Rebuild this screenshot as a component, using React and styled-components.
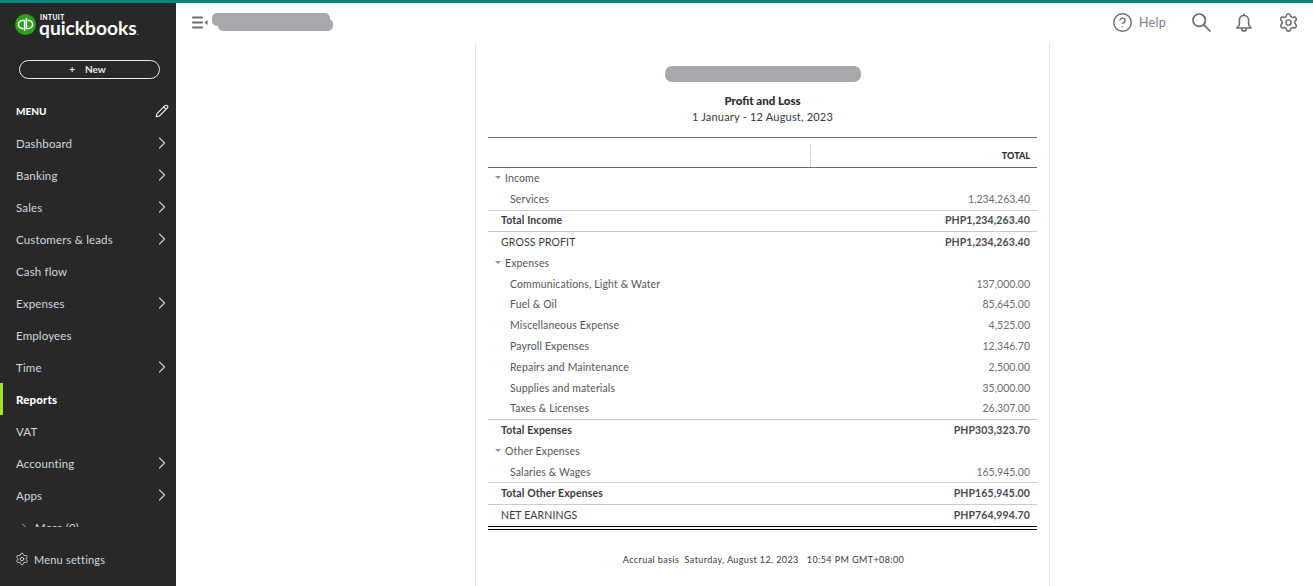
import React from 'react';
import styled, { createGlobalStyle } from 'styled-components';
import { ChevronRight, Pencil, Settings, CircleHelp } from 'lucide-react';

const Global = createGlobalStyle`
  html, body { margin: 0; padding: 0; height: 100%; background: #fff; overflow: hidden; }
  #root { height: 100%; }
  * { box-sizing: border-box; }
  body { font-family: "Lato", "Liberation Sans", sans-serif; }
`;

const Page = styled.div`
  height: 586px;
  display: flex;
  flex-direction: column;
  border-top: 3px solid #00857c;
`;
const Body = styled.div`
  flex: 1;
  display: flex;
  min-height: 0;
`;
const Sidebar = styled.aside`
  width: 176px;
  flex: none;
  background: #282828;
  color: #d4d7dc;
  display: flex;
  flex-direction: column;
`;
const Brand = styled.div`
  height: 38px;
  padding: 11px 0 0 15px;
  display: flex;
  gap: 3px;
`;
const BrandWords = styled.div`
  color: #fff;
  display: flex;
  flex-direction: column;
  line-height: 1;
  margin-top: 1px;
`;
const Intuit = styled.span`
  font-size: 6.5px;
  font-weight: 900;
  letter-spacing: 0.5px;
  height: 6px;
  line-height: 6px;
  padding-left: 1px;
`;
const Quick = styled.span`
  font-size: 19.2px;
  font-weight: 700;
  line-height: 14px;
`;
const Dot = styled.span`
  font-size: 8px;
  font-weight: 400;
`;
const NewButton = styled.button`
  margin: 19px 0 0 19px;
  width: 141px;
  height: 19px;
  border: 1px solid #e8e8e8;
  border-radius: 10px;
  background: transparent;
  color: #e6e6e6;
  font: 700 10px "Lato", sans-serif;
  display: flex;
  align-items: center;
  justify-content: center;
  gap: 10px;
  padding: 0 4px 1px 0;
`;
const MenuHead = styled.div`
  height: 32px;
  margin-top: 16px;
  padding: 0 7px 0 16px;
  display: flex;
  align-items: center;
  justify-content: space-between;
  font-size: 10px;
  font-weight: 900;
  color: #fff;
`;
const Nav = styled.nav`
  height: 400px;
  flex: none;
  overflow: hidden;
`;
const NavItem = styled.div`
  height: 32px;
  display: flex;
  align-items: center;
  justify-content: space-between;
  padding: 0 4px 0 ${p => (p.$active ? 13 : 16)}px;
  font-size: 11.5px;
  letter-spacing: 0.15px;
  border-left: ${p => (p.$active ? '3px solid #a4e02c' : 'none')};
  font-weight: ${p => (p.$active ? 900 : 400)};
  color: ${p => (p.$active ? '#fff' : '#d4d7dc')};
`;
const MoreItem = styled.div`
  height: 32px;
  display: flex;
  align-items: center;
  gap: 5px;
  padding-left: 18px;
  font-size: 11.5px;
  letter-spacing: 0.15px;
`;
const SettingsRow = styled.div`
  margin-top: 25px;
  padding-left: 15px;
  display: flex;
  align-items: center;
  gap: 5px;
  font-size: 11px;
  letter-spacing: 0.2px;
`;
const Content = styled.div`
  flex: 1;
  min-width: 0;
  display: flex;
  flex-direction: column;
`;
const Header = styled.header`
  height: 39px;
  flex: none;
  display: flex;
  align-items: center;
  padding: 0 14px 0 15px;
  color: #6b6c72;
`;
const HeaderRight = styled.div`
  margin-left: auto;
  display: flex;
  align-items: center;
`;
const HelpBlock = styled.div`
  display: flex;
  align-items: center;
  gap: 6px;
  font-size: 12.5px;
  letter-spacing: 0.3px;
  margin-right: 26px;
  color: #7b7c82;
`;
const HelpIcon = styled.span`
  display: flex;
  color: #6b6c72;
`;
const IconGap = styled.span`
  display: flex;
  margin-right: ${p => p.$mr || 0}px;
`;
const Main = styled.main`
  flex: 1;
  padding-left: 299px;
  min-height: 0;
`;
const Paper = styled.section`
  width: 575px;
  height: 100%;
  border-left: 1px solid #e6e8f0;
  border-right: 1px solid #e6e8f0;
  padding: 0 12px;
  color: #393a3d;
  display: flex;
  flex-direction: column;
`;
const Title = styled.div`
  display: flex;
  flex-direction: column;
  align-items: center;
  height: 95px;
  padding-top: 24px;
`;
const Heading = styled.div`
  margin-top: 10px;
  font-size: 11.5px;
  font-weight: 900;
  line-height: 15px;
  color: #2d2d30;
`;
const DateLine = styled.div`
  margin-top: 1px;
  font-size: 11px;
  letter-spacing: 0.2px;
  line-height: 15px;
  color: #393a3d;
`;
const HeadRow = styled.div`
  height: 31px;
  border-top: 1px solid #6b6c72;
  border-bottom: 1px solid #6b6c72;
  display: flex;
  align-items: center;
  justify-content: flex-end;
  padding: 6px 7px 0 0;
  font-size: 9px;
  font-weight: 900;
  color: #2d2d30;
  position: relative;
`;
const DottedDivider = styled.i`
  position: absolute;
  left: 322px;
  top: 6px;
  bottom: 0;
  border-left: 1px dotted #b0b2b8;
`;
const Row = styled.div`
  box-sizing: content-box;
  height: 19.77px;
  flex: none;
  display: flex;
  align-items: center;
  justify-content: space-between;
  padding: 0 7px 1px ${p => p.$indent}px;
  font-size: 10.5px;
  letter-spacing: 0.13px;
  color: ${p => (p.$bold ? '#393a3d' : '#55565b')};
  font-weight: ${p => (p.$bold ? 700 : 400)};
  border-bottom: ${p => (p.$line ? '1px solid #c9cbd0' : 'none')};
`;
const EndRow = styled(Row)`
  height: 20px;
  border-bottom: 4px double #000;
`;
const Label = styled.span`
  display: flex;
  align-items: center;
  gap: 4px;
  font-weight: ${p => (p.$plain ? 400 : 'inherit')};
`;
const Amount = styled.span`
  letter-spacing: ${p => (p.$bold ? '0.12px' : '0')};
  color: ${p => (p.$bold ? '#4a4b50' : '#6b6c72')};
`;
const Caret = styled.i`
  width: 0;
  height: 0;
  border-left: 3px solid transparent;
  border-right: 3px solid transparent;
  border-top: 3px solid #8d9096;
`;
const Footer = styled.div`
  margin-top: 24px;
  padding-left: 2px;
  text-align: center;
  font-size: 9px;
  letter-spacing: 0.4px;
  color: #393a3d;
  white-space: pre;
`;

const navItems = [
  ['Dashboard', 1], ['Banking', 1], ['Sales', 1], ['Customers & leads', 1], ['Cash flow', 0],
  ['Expenses', 1], ['Employees', 0], ['Time', 1], ['Reports', 0, 1], ['VAT', 0],
  ['Accounting', 1], ['Apps', 1],
];

const rows = [
  { t: 'Income', caret: 1, indent: 7 },
  { t: 'Services', v: '1,234,263.40', indent: 22, line: 1 },
  { t: 'Total Income', v: 'PHP1,234,263.40', indent: 13, bold: 1, line: 1 },
  { t: 'GROSS PROFIT', v: 'PHP1,234,263.40', indent: 13, bold: 1, plain: 1 },
  { t: 'Expenses', caret: 1, indent: 7 },
  { t: 'Communications, Light & Water', v: '137,000.00', indent: 22 },
  { t: 'Fuel & Oil', v: '85,645.00', indent: 22 },
  { t: 'Miscellaneous Expense', v: '4,525.00', indent: 22 },
  { t: 'Payroll Expenses', v: '12,346.70', indent: 22 },
  { t: 'Repairs and Maintenance', v: '2,500.00', indent: 22 },
  { t: 'Supplies and materials', v: '35,000.00', indent: 22 },
  { t: 'Taxes & Licenses', v: '26,307.00', indent: 22, line: 1 },
  { t: 'Total Expenses', v: 'PHP303,323.70', indent: 13, bold: 1 },
  { t: 'Other Expenses', caret: 1, indent: 7 },
  { t: 'Salaries & Wages', v: '165,945.00', indent: 22, line: 1 },
  { t: 'Total Other Expenses', v: 'PHP165,945.00', indent: 13, bold: 1, line: 1 },
];

const QbLogo = () => (
  <svg width="21" height="21" viewBox="0 0 21 21" fill="none">
    <circle cx="10.5" cy="10.5" r="10.5" fill="#2ca01c" />
    <path d="M9.6 17V6.5H7.4a4 4 0 0 0 0 8h1" stroke="#fff" strokeWidth="1.5" />
    <path d="M11.4 4v10.5h2.2a4 4 0 0 0 0-8h-1" stroke="#fff" strokeWidth="1.5" />
  </svg>
);

const Hamburger = () => (
  <svg width="19" height="13" viewBox="0 0 19 13" fill="#6b6c72">
    <rect x="1" y="0.5" width="11" height="2" rx="1" />
    <rect x="1" y="5.5" width="11" height="2" rx="1" />
    <rect x="1" y="10.5" width="11" height="2" rx="1" />
    <path d="M13.5 6.5 16.5 4v5z" />
  </svg>
);

const SearchIcon = () => (
  <svg width="19" height="19" viewBox="0 0 19 19" fill="none" stroke="#6b6c72" strokeWidth="1.7" strokeLinecap="round">
    <circle cx="7.2" cy="7.2" r="6.2" />
    <path d="M11.8 11.8 18 18" />
  </svg>
);

const BellIcon = () => (
  <svg width="16" height="20" viewBox="0 0 16 20" fill="none" stroke="#6b6c72" strokeWidth="1.6" strokeLinejoin="round">
    <path d="M8 2.5c-3 0-4.6 2.2-4.6 5v3.2c0 2-1 3.2-2.4 4.3h14c-1.4-1.1-2.4-2.3-2.4-4.3V7.5c0-2.8-1.6-5-4.6-5z" />
    <path d="M8 .6v1.8M5.6 15.4a2.4 2.6 0 0 0 4.8 0" />
  </svg>
);

const RedactHeader = () => (
  <svg width="122" height="20" viewBox="0 0 122 20" fill="#a7a8ac" style={{ marginLeft: 2 }}>
    <rect x="0" y="0" width="118" height="13" rx="5" />
    <rect x="6" y="6" width="115" height="12" rx="5" />
  </svg>
);

const RedactTitle = () => (
  <svg width="196" height="17" viewBox="0 0 196 17" fill="#a7a8ac">
    <rect x="0" y="0" width="196" height="16" rx="7" />
  </svg>
);

export default function App() {
  return (
    <Page>
      <Global />
      <Body>
        <Sidebar>
          <Brand>
            <QbLogo />
            <BrandWords>
              <Intuit>INTUIT</Intuit>
              <Quick>quickbooks<Dot>.</Dot></Quick>
            </BrandWords>
          </Brand>
          <NewButton><span>+</span><span>New</span></NewButton>
          <MenuHead>MENU <Pencil size={14} color="#fff" strokeWidth={1.8} /></MenuHead>
          <Nav>
            {navItems.map(([t, chev, active]) => (
              <NavItem key={t} $active={active}>
                {t}
                {chev ? <ChevronRight size={20} strokeWidth={1.4} color="#c8cbd0" /> : null}
              </NavItem>
            ))}
            <MoreItem><ChevronRight size={12} strokeWidth={1.5} />More (0)</MoreItem>
          </Nav>
          <SettingsRow><Settings size={14} strokeWidth={1.5} />Menu settings</SettingsRow>
        </Sidebar>
        <Content>
          <Header>
            <Hamburger />
            <RedactHeader />
            <HeaderRight>
              <HelpBlock><HelpIcon><CircleHelp size={21} strokeWidth={1.6} /></HelpIcon>Help</HelpBlock>
              <IconGap $mr={25}><SearchIcon /></IconGap>
              <IconGap $mr={26}><BellIcon /></IconGap>
              <IconGap><Settings size={21} strokeWidth={1.7} /></IconGap>
            </HeaderRight>
          </Header>
          <Main>
            <Paper>
              <Title>
                <RedactTitle />
                <Heading>Profit and Loss</Heading>
                <DateLine>1 January - 12 August, 2023</DateLine>
              </Title>
              <HeadRow><DottedDivider />TOTAL</HeadRow>
              {rows.map(r => (
                <Row key={r.t} $indent={r.indent} $bold={r.bold} $line={r.line}>
                  <Label $plain={r.plain}>{r.caret ? <Caret /> : null}{r.t}</Label>
                  {r.v ? <Amount $bold={r.bold}>{r.v}</Amount> : null}
                </Row>
              ))}
              <EndRow $indent={13} $bold>
                <Label $plain>NET EARNINGS</Label>
                <Amount $bold>PHP764,994.70</Amount>
              </EndRow>
              <Footer>Accrual basis  Saturday, August 12, 2023   10:54 PM GMT+08:00</Footer>
            </Paper>
          </Main>
        </Content>
      </Body>
    </Page>
  );
}
